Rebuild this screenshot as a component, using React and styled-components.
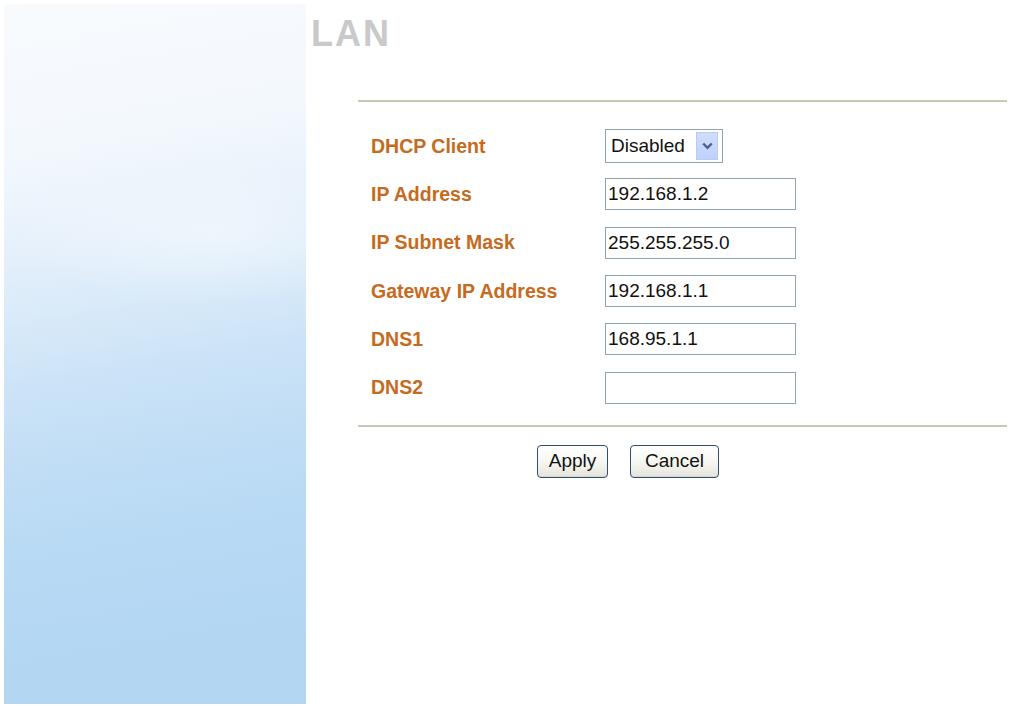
import React from "react";
import styled, { createGlobalStyle } from "styled-components";

const Global = createGlobalStyle`
  html, body { margin: 0; padding: 0; background: #ffffff; }
  body { font-family: "Liberation Sans", Arial, sans-serif; }
`;

const Page = styled.div`
  display: flex;
  width: 1012px;
  height: 706px;
  padding: 4px 0 2px 4px;
  box-sizing: border-box;
  overflow: hidden;
`;

const Sidebar = styled.div`
  flex: 0 0 302px;
  height: 700px;
  background:
    radial-gradient(ellipse 200px 70px at 210px 230px, rgba(248,251,254,0.55), rgba(248,251,254,0) 100%),
    linear-gradient(170deg, #f8fbfe 0%, #f3f8fd 20%, #e7f1fb 32%, #d9eaf9 42%, #cbe3f7 52%, #c0ddf5 63%, #b7d9f4 76%, #b3d6f3 90%, #b3d6f3 100%);
`;

const Main = styled.div`
  flex: 1;
  display: flex;
  flex-direction: column;
  padding-top: 12px;
`;

const Title = styled.h1`
  margin: 0 0 0 5px;
  font-family: "Liberation Sans", Arial, sans-serif;
  font-size: 36px;
  line-height: 36px;
  font-weight: bold;
  letter-spacing: 2px;
  color: #c9c9c9;
`;

const Divider = styled.div`
  height: 2px;
  margin: ${(p) => p.$top}px 5px 0 52px;
  background: #c8c8b4;
`;

const Form = styled.div`
  display: grid;
  grid-template-columns: 234px 1fr;
  grid-auto-rows: 48.3px;
  margin: 20px 0 0 65px;
  align-items: center;
`;

const Label = styled.div`
  font-family: "Liberation Sans", Arial, sans-serif;
  font-size: 19.5px;
  font-weight: bold;
  color: #c66a20;
`;

const Field = styled.div`
  display: flex;
  align-items: center;
`;

const TextInput = styled.input`
  box-sizing: border-box;
  width: 191px;
  height: 32px;
  padding: 0 2px;
  border: 1px solid #8ea3b8;
  background: #fff;
  font-family: "Liberation Sans", Arial, sans-serif;
  font-size: 19px;
  color: #111;
  outline: none;
`;

const SelectBox = styled.div`
  box-sizing: border-box;
  width: 118px;
  height: 34px;
  border: 1px solid #8ea3b8;
  display: flex;
  align-items: center;
  justify-content: space-between;
  padding: 2px 4px 2px 5px;
  background: #fff;
`;

const SelectText = styled.span`
  font-family: "Liberation Sans", Arial, sans-serif;
  font-size: 19px;
  color: #111;
`;

const ArrowButton = styled.span`
  width: 22px;
  height: 28px;
  display: flex;
  align-items: center;
  justify-content: center;
  background: linear-gradient(180deg, #d0ddfc 0%, #c0d1fb 100%);
  border: 1px solid #b9cbf5;
  box-sizing: border-box;
`;

const Buttons = styled.div`
  display: flex;
  gap: 22px;
  margin: 18px 0 0 231px;
`;

const Button = styled.button`
  box-sizing: border-box;
  height: 33px;
  width: ${(p) => p.$w}px;
  padding: 0;
  border: 1px solid #2f4f70;
  border-radius: 4px;
  background: linear-gradient(180deg, #ffffff 0%, #f6f6f1 55%, #e4e3da 100%);
  font-family: "Liberation Sans", Arial, sans-serif;
  font-size: 19px;
  color: #111;
  box-shadow: inset 0 -1px 0 #d6d5cc;
`;

const rows = [
  { label: "IP Address", value: "192.168.1.2" },
  { label: "IP Subnet Mask", value: "255.255.255.0" },
  { label: "Gateway IP Address", value: "192.168.1.1" },
  { label: "DNS1", value: "168.95.1.1" },
  { label: "DNS2", value: "" },
];

export default function App() {
  return (
    <>
      <Global />
      <Page>
        <Sidebar />
        <Main>
          <Title>LAN</Title>
          <Divider $top={48} />
          <Form>
            <Label>DHCP Client</Label>
            <Field>
              <SelectBox>
                <SelectText>Disabled</SelectText>
                <ArrowButton>
                  <svg width="11" height="8" viewBox="0 0 11 8">
                    <path d="M1.2 1.5 L5.5 5.8 L9.8 1.5" fill="none" stroke="#4a5f8a" strokeWidth="2.4" />
                  </svg>
                </ArrowButton>
              </SelectBox>
            </Field>
            {rows.map((r) => (
              <React.Fragment key={r.label}>
                <Label>{r.label}</Label>
                <Field>
                  <TextInput defaultValue={r.value} />
                </Field>
              </React.Fragment>
            ))}
          </Form>
          <Divider $top={13} />
          <Buttons>
            <Button $w={71}>Apply</Button>
            <Button $w={89}>Cancel</Button>
          </Buttons>
        </Main>
      </Page>
    </>
  );
}
